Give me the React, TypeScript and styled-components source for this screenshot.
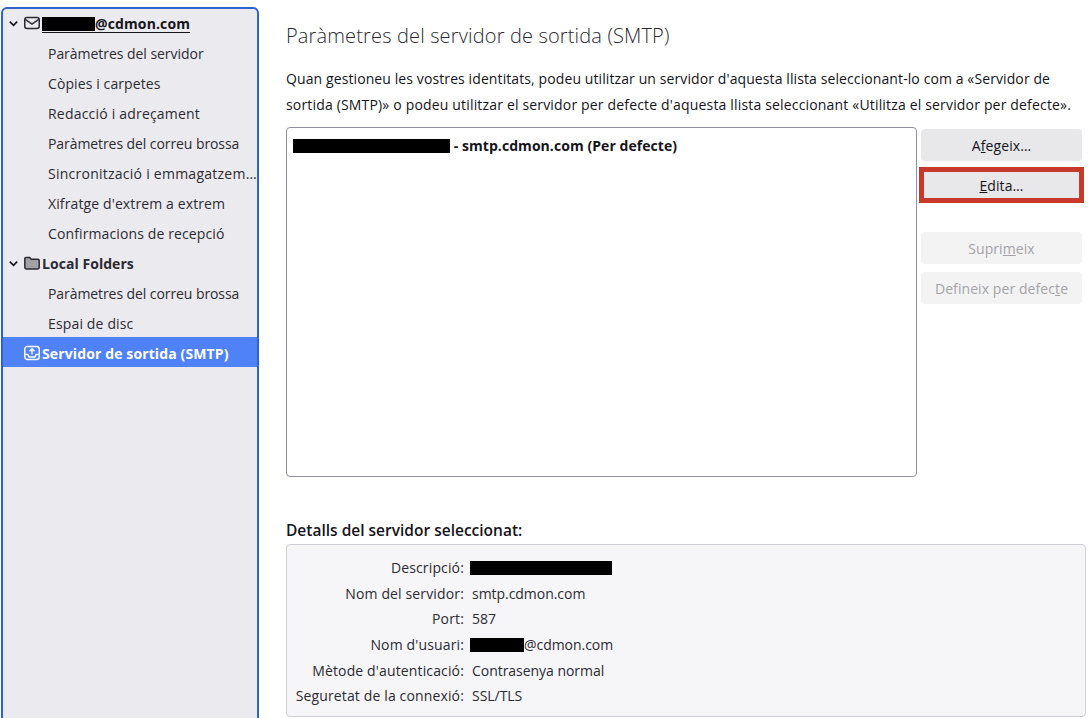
import React from "react";
import styled, { createGlobalStyle } from "styled-components";

const Global = createGlobalStyle`
  html, body { margin: 0; padding: 0; height: 718px; overflow: hidden; background: #fff; }
  body { font-family: "Open Sans", "Noto Sans", "Liberation Sans", sans-serif; color: #15141a; }
`;

const Page = styled.div`
  display: flex;
  align-items: flex-start;
  width: 1089px;
  height: 718px;
  overflow: hidden;
`;

const Sidebar = styled.nav`
  box-sizing: border-box;
  flex: none;
  width: 258px;
  height: 740px;
  margin: 7px 0 0 1px;
  background: #ebebef;
  border: 2px solid #2f62cf;
  border-radius: 6px 6px 0 0;
`;

const Tree = styled.div`
  margin-top: -2px;
`;

const Row = styled.div<{ $selected?: boolean; $head?: boolean; $track?: number }>`
  box-sizing: border-box;
  display: flex;
  align-items: center;
  height: 30px;
  padding: 2px 0 0 ${(p) => (p.$head ? "5px" : "45px")};
  font-size: 14px;
  letter-spacing: ${(p) => p.$track ?? (p.$head ? 0.12 : -0.08)}px;
  white-space: nowrap;
  font-weight: ${(p) => (p.$head ? 700 : 400)};
  background: ${(p) => (p.$selected ? "#4f82f7" : "transparent")};
  color: ${(p) => (p.$selected ? "#fff" : "#2b2a33")};
`;

const Chevron = styled.svg`
  flex: none;
  width: 11px;
  height: 11px;
  margin-right: 5px;
`;

const TreeIcon = styled.svg<{ $indent?: boolean }>`
  flex: none;
  width: 16px;
  height: 16px;
  margin-left: ${(p) => (p.$indent ? "16px" : "0")};
  margin-right: 2px;
`;

const Focused = styled.span`
  display: flex;
  align-items: center;
  margin-top: 2px;
  border-bottom: 1px solid #15141a;
  line-height: 16px;
  color: #15141a;
`;

const Redact = styled.span<{ $w: number }>`
  display: inline-block;
  flex: none;
  width: ${(p) => p.$w}px;
  height: 14px;
  background: #000;
  vertical-align: -2px;
`;

const Main = styled.main`
  flex: 1;
  min-width: 0;
  padding: 22px 3px 0 27px;
`;

const Title = styled.h1`
  margin: 0;
  font-size: 20px;
  line-height: 28px;
  font-weight: 300;
  letter-spacing: 0.15px;
  color: #2b2a33;
`;

const Intro = styled.p`
  margin: 15px 0 0;
  font-size: 14px;
  line-height: 27px;
  white-space: nowrap;
`;

const IntroLine = styled.span<{ $spacing: number; $tight?: boolean }>`
  display: block;
  margin-top: ${(p) => (p.$tight ? "-1px" : "0")};
  letter-spacing: ${(p) => p.$spacing}px;
`;

const ServerArea = styled.div`
  display: flex;
  align-items: flex-start;
  gap: 4px;
  margin-top: 9px;
`;

const ServerList = styled.div`
  box-sizing: border-box;
  width: 631px;
  height: 350px;
  padding: 7px 6px;
  background: #fff;
  border: 1px solid #8f8f9d;
  border-radius: 4px;
  font-size: 14px;
  font-weight: 700;
  line-height: 22px;
  letter-spacing: 0.06px;
`;

const ButtonColumn = styled.div`
  display: flex;
  flex-direction: column;
  gap: 8px;
  width: 161px;
  padding-top: 2px;
`;

const Button = styled.button<{ $highlight?: boolean; $spaced?: boolean }>`
  position: relative;
  height: 32px;
  width: 161px;
  padding: 0;
  border: 0;
  border-radius: 4px;
  margin-top: ${(p) => (p.$spaced ? "23px" : "0")};
  font: inherit;
  font-size: 14px;
  letter-spacing: 0.08px;
  color: #15141a;
  background: #e8e8ea;
  &:disabled { color: #a3a3a8; background: #f3f3f4; }
  ${(p) =>
    p.$highlight &&
    `&::after {
      content: "";
      position: absolute;
      inset: -2px;
      border: 5px solid #c8392b;
    }`}
`;

const DetailsTitle = styled.h2`
  margin: 43px 0 0;
  font-size: 15.5px;
  line-height: 20px;
  font-weight: 600;
  letter-spacing: 0;
`;

const DetailsBox = styled.div`
  box-sizing: border-box;
  display: grid;
  grid-template-columns: 177px 1fr;
  grid-auto-rows: 25.6px;
  column-gap: 8px;
  align-items: center;
  width: 800px;
  height: 173px;
  margin-top: 4px;
  padding: 10px 0 0;
  background: #f6f6f8;
  border: 1px solid #cfcfd8;
  border-radius: 4px;
  font-size: 14px;
  color: #2b2a33;
`;

const Label = styled.span`
  text-align: right;
  white-space: nowrap;
  letter-spacing: 0.14px;
`;

const Value = styled.span<{ $redacted?: boolean }>`
  margin-left: ${(p) => (p.$redacted ? "-2px" : "0")};
  white-space: nowrap;
  letter-spacing: -0.04px;
`;

const ChevronIcon = () => (
  <Chevron viewBox="0 0 12 12" fill="none" stroke="#15141a" strokeWidth="1.800">
    <path d="M2 4l4 4 4-4" />
  </Chevron>
);

const MailIcon = () => (
  <TreeIcon viewBox="0 0 16 16" fill="none" stroke="#2b2a33" strokeWidth="1.500">
    <rect x="0.750" y="2.500" width="14.500" height="11" rx="2.200" />
    <path d="M1.200 4.300L8 9.200l6.800-4.900" />
  </TreeIcon>
);

const FolderIcon = () => (
  <TreeIcon viewBox="0 0 16 16" stroke="#2b2a33" strokeWidth="1.500">
    <path d="M0.800 3.800a1.300 1.300 0 0 1 1.300-1.300h3.600l1.500 1.800h6.700a1.300 1.300 0 0 1 1.300 1.300v7a1.300 1.300 0 0 1-1.300 1.300H2.100a1.300 1.300 0 0 1-1.300-1.300z" fill="#a2a2a6" />
  </TreeIcon>
);

const OutboxIcon = () => (
  <TreeIcon $indent viewBox="0 0 16 16" fill="none" stroke="#fff" strokeWidth="1.400">
    <rect x="0.800" y="1.500" width="14.400" height="13" rx="2.500" />
    <path d="M1 9.500h3l1 2.500h6l1-2.500h3" />
    <path d="M8 9.500V4M5.500 6.300L8 3.800l2.500 2.500" />
  </TreeIcon>
);

const details: [string, React.ReactNode, boolean?][] = [
  ["Descripció:", <Redact $w={142} />, true],
  ["Nom del servidor:", "smtp.cdmon.com"],
  ["Port:", "587"],
  ["Nom d'usuari:", <><Redact $w={54} />@cdmon.com</>, true],
  ["Mètode d'autenticació:", "Contrasenya normal"],
  ["Seguretat de la connexió:", "SSL/TLS"],
];

export default function App() {
  return (
    <>
      <Global />
      <Page>
        <Sidebar>
          <Tree>
            <Row $head>
              <ChevronIcon />
              <MailIcon />
              <Focused><Redact $w={53} />@cdmon.com</Focused>
            </Row>
            <Row $track={-0.04}>Paràmetres del servidor</Row>
            <Row $track={0.1}>Còpies i carpetes</Row>
            <Row $track={0.2}>Redacció i adreçament</Row>
            <Row>Paràmetres del correu brossa</Row>
            <Row $track={0.25}>Sincronització i emmagatzem…</Row>
            <Row $track={0.12}>Xifratge d'extrem a extrem</Row>
            <Row $track={0.12}>Confirmacions de recepció</Row>
            <Row $head $track={0.05}>
              <ChevronIcon />
              <FolderIcon />
              Local Folders
            </Row>
            <Row>Paràmetres del correu brossa</Row>
            <Row $track={0.15}>Espai de disc</Row>
            <Row $head $selected>
              <OutboxIcon />
              Servidor de sortida (SMTP)
            </Row>
          </Tree>
        </Sidebar>
        <Main>
          <Title>Paràmetres del servidor de sortida (SMTP)</Title>
          <Intro>
            <IntroLine $spacing={0.1}>Quan gestioneu les vostres identitats, podeu utilitzar un servidor d'aquesta llista seleccionant-lo com a «Servidor de</IntroLine>
            <IntroLine $spacing={0.17} $tight>sortida (SMTP)» o podeu utilitzar el servidor per defecte d'aquesta llista seleccionant «Utilitza el servidor per defecte».</IntroLine>
          </Intro>
          <ServerArea>
            <ServerList>
              <Redact $w={157} /> - smtp.cdmon.com (Per defecte)
            </ServerList>
            <ButtonColumn>
              <Button>A<u>f</u>egeix…</Button>
              <Button $highlight><u>E</u>dita…</Button>
              <Button $spaced disabled>Supri<u>m</u>eix</Button>
              <Button disabled>Defineix per defec<u>t</u>e</Button>
            </ButtonColumn>
          </ServerArea>
          <DetailsTitle>Detalls del servidor seleccionat:</DetailsTitle>
          <DetailsBox>
            {details.map(([label, value, redacted]) => (
              <React.Fragment key={label}>
                <Label>{label}</Label>
                <Value $redacted={redacted}>{value}</Value>
              </React.Fragment>
            ))}
          </DetailsBox>
        </Main>
      </Page>
    </>
  );
}
